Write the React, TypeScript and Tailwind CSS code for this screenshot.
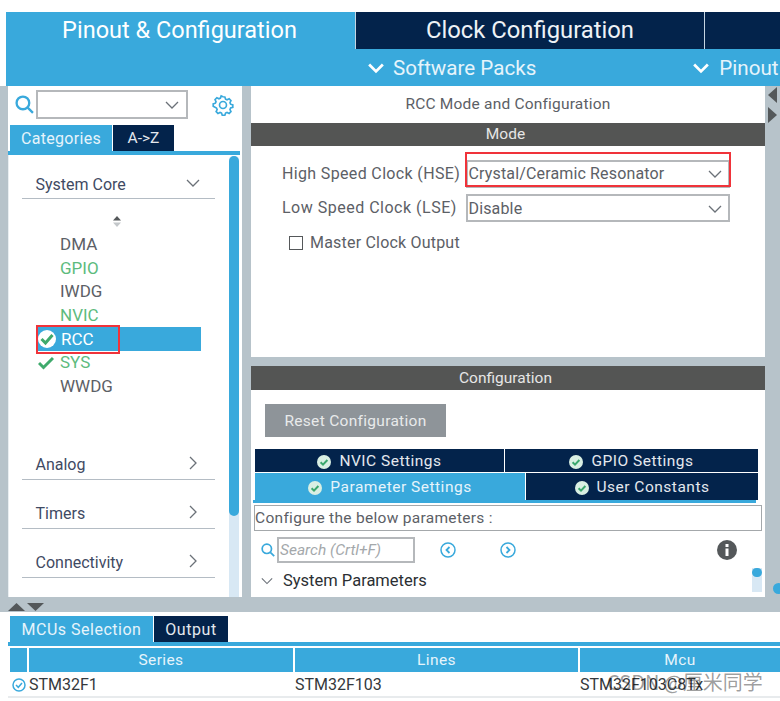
import React from "react";

const Chevron = ({ dir = "down", size = 14, color = "#6b7178", sw = 1.3 }: { dir?: "down" | "right"; size?: number; color?: string; sw?: number }) => (
  <svg width={size} height={size} viewBox="0 0 14 14" fill="none" stroke={color} strokeWidth={sw} className="shrink-0">
    {dir === "down" ? <path d="M1 4l6 6 6-6" /> : <path d="M4 1l6 6-6 6" />}
  </svg>
);

const Search = ({ size = 18 }: { size?: number }) => (
  <svg width={size} height={size} viewBox="0 0 18 18" fill="none" stroke="#39a9dc" strokeWidth="2.2" className="shrink-0">
    <circle cx="7.5" cy="7.5" r="6" />
    <path d="M12 12l5 5" />
  </svg>
);

const TabCheck = () => (
  <svg width="14" height="14" viewBox="0 0 14 14" className="shrink-0">
    <circle cx="7" cy="7" r="7" fill="#d9efe3" />
    <path d="M3.6 7.2l2.4 2.4 4.4-4.6" fill="none" stroke="#3aa76d" strokeWidth="2" />
  </svg>
);

const CircleArrow = ({ left }: { left?: boolean }) => (
  <svg width="16" height="16" viewBox="0 0 16 16" fill="none" stroke="#39a9dc" strokeWidth="1.5">
    <circle cx="8" cy="8" r="7" />
    <path d={left ? "M9.5 5L6.5 8l3 3" : "M6.5 5l3 3-3 3"} strokeWidth="1.8" />
  </svg>
);

const Cat = ({ label, open, h, pb = "pb-[4px]" }: { label: string; open?: boolean; h: string; pb?: string }) => (
  <div className={`ml-[13px] flex w-[193px] items-end justify-between border-b border-[#b4bcc4] pl-[13.500px] pr-[15px] text-[16px] text-[#3f4a63] ${pb} ${h}`}>
    <span className="leading-[20px]">{label}</span>
    <span className="mb-[5px]"><Chevron dir={open ? "down" : "right"} size={14} /></span>
  </div>
);

const Item = ({ label, color = "text-[#5c6066]", check }: { label: string; color?: string; check?: boolean }) => (
  <div className={`ml-[28px] flex h-[23.7px] w-[164px] items-center text-[17px] leading-none ${color}`}>
    <span className="flex w-[23px] justify-center pr-[6px]">
      {check && (
        <svg width="16" height="14" viewBox="0 0 16 14" fill="none" stroke="#3faa6c" strokeWidth="3" className="shrink-0">
          <path d="M1 7l4.500 4.500L15 2" />
        </svg>
      )}
    </span>
    <span>{label}</span>
  </div>
);

const DarkTab = ({ label, w, h = "h-[23px]" }: { label: string; w: string; h?: string }) => (
  <div className={`flex items-center justify-center gap-2 bg-[#03234b] pt-[2px] text-[15.500px] tracking-[0.5px] text-[#e4e8ee] ${w} ${h}`}>
    <TabCheck />
    <span>{label}</span>
  </div>
);

const Select = ({ label }: { label: string }) => (
  <div className="flex h-[28px] w-[264px] items-center justify-between border-2 border-[#b5b8bb] pl-[0.500px] pr-[6px] pt-[1px] text-[16px] tracking-[0.15px] text-[#5c6066]">
    <span>{label}</span>
    <Chevron size={14} />
  </div>
);

const Tri = ({ d, cls }: { d: string; cls: string }) => (
  <svg viewBox="0 0 10 10" preserveAspectRatio="none" className={cls} fill="#54585a"><path d={d} /></svg>
);

export default function App() {
  return (
    <div className="relative h-[701px] w-[780px] overflow-hidden bg-white font-['Roboto',sans-serif]">
      <div className="ml-[6px] mt-[12px] flex h-[74px] flex-col bg-[#39a9dc] text-white">
        <div className="flex h-[37px]">
          <div className="flex w-[349px] items-center justify-center pr-[2px] pt-[1px] text-[23.500px]">Pinout &amp; Configuration</div>
          <div className="flex w-[349px] items-center justify-center border-l border-[#c5d5e2] bg-[#03234b] pt-[1px] text-[23.800px] text-[#eef2f6]">Clock Configuration</div>
          <div className="flex-1 border-l border-[#c5d5e2] bg-[#03234b]" />
        </div>
        <div className="flex h-[37px] items-center whitespace-nowrap pt-[1px] text-[#e6f4fb]">
          <div className="ml-[362px] flex items-center gap-[9px] text-[20.600px]">
            <Chevron size={16} color="#fff" sw={2.4} />
            <span>Software Packs</span>
          </div>
          <div className="ml-[157px] flex items-center gap-[10px] text-[20.600px]">
            <Chevron size={16} color="#fff" sw={2.4} />
            <span>Pinout</span>
          </div>
        </div>
      </div>

      <div className="flex h-[511px] bg-[#b7c3ca] pl-[8px]">
        <div className="flex w-[234px] flex-col bg-white">
          <div className="flex h-[36px] items-center pl-[7px] pt-[1px]">
            <Search size={19} />
            <div className="ml-[2px] flex h-[29px] w-[152px] items-center justify-end border-2 border-[#b5b8bb] pr-[7px]">
              <Chevron size={14} />
            </div>
            <svg width="22" height="22" viewBox="0 0 24 24" fill="none" stroke="#39a9dc" strokeWidth="1.800" className="ml-[24px]">
              <path d="M12 3l2 .2.800 2.400 1.600.7 2.300-1.100 2 2-1.100 2.300.7 1.600 2.400.8v2.600l-2.400.8-.7 1.600 1.100 2.300-2 2-2.300-1.100-1.600.7-.8 2.400h-2.800l-.8-2.400-1.600-.7-2.300 1.100-2-2 1.100-2.300-.7-1.600L1.300 13.400v-2.600l2.400-.8.700-1.600-1.100-2.300 2-2 2.300 1.100 1.600-.7.800-2.400z" />
              <circle cx="12" cy="12" r="3.800" />
            </svg>
          </div>
          <div className="flex h-[29px] pl-[2px] pt-[3px]">
            <div className="flex h-[26px] w-[102px] items-center justify-center bg-[#39a9dc] pt-[1px] text-[16px] tracking-[0.3px] text-[#e6f4fb]">Categories</div>
            <div className="ml-[1px] flex h-[26px] w-[61px] items-center justify-center bg-[#03234b] pt-[1px] text-[15.500px] text-[#e4e8ee]">A-&gt;Z</div>
          </div>
          <div className="relative h-[4px] w-[232px] bg-[#39a9dc]" />
          <div className="relative flex-1 border-l border-[#e9eef1]">
            <Cat label="System Core" open h="h-[44px]" pb="pb-[3px]" />
            <div className="flex h-[33.500px] items-center justify-center pr-[18px] pt-[11px]">
              <svg width="10" height="13" viewBox="0 0 10 13">
                <path d="M5 1l4 4.500H1z" fill="#54585a" />
                <path d="M5 12l4-4.500H1z" fill="#c3c7ca" />
              </svg>
            </div>
            <Item label="DMA" />
            <Item label="GPIO" color="text-[#5dbb7d]" />
            <Item label="IWDG" />
            <Item label="NVIC" color="text-[#5dbb7d]" />
            <div className="ml-[28px] flex h-[23.7px] w-[164px] items-center bg-[#39a9dc] text-[17px] leading-none text-white">
              <span className="flex w-[23px] justify-center pr-[3px]">
                <svg width="18" height="18" viewBox="0 0 18 18" className="shrink-0">
                  <circle cx="9" cy="9" r="9" fill="#fff" />
                  <path d="M3.500 9l4 4 7-8" fill="none" stroke="#3faa6c" strokeWidth="3" />
                </svg>
              </span>
              <span className="ml-[1px]">RCC</span>
            </div>
            <Item label="SYS" color="text-[#5dbb7d]" check />
            <Item label="WWDG" />
            <div className="h-[0.500px]" />
            <Cat label="Analog" h="h-[81px]" />
            <Cat label="Timers" h="h-[49px]" />
            <Cat label="Connectivity" h="h-[49px]" />
            <div className="absolute bottom-0 right-[3px] top-[1px] w-[10px] rounded-t-[4px] bg-[#d8e8f4]">
              <div className="h-[360px] rounded-[5px] bg-[#39a9dc]" />
            </div>
          </div>
        </div>

        <div className="ml-[9px] flex w-[514px] flex-col bg-white">
          <div className="flex h-[37px] items-center justify-center pt-[1px] text-[15.500px] tracking-[0.2px] text-[#5c6066]">RCC Mode and Configuration</div>
          <div className="flex h-[23px] items-center justify-center bg-[#545554] pr-[5px] pt-[1px] text-[15.500px] text-[#e6e6e6]">Mode</div>
          <div className="h-[211px]">
            <div className="ml-[31px] mt-[12px] flex h-[28px] items-center pt-[3px] text-[16px] tracking-[0.35px] text-[#5c6066]">
              <span className="w-[184px]">High Speed Clock (HSE)</span>
              <Select label="Crystal/Ceramic Resonator" />
            </div>
            <div className="ml-[31px] mt-[8px] flex h-[28px] items-center text-[16px] tracking-[0.5px] text-[#5c6066]">
              <span className="w-[184px]">Low Speed Clock (LSE)</span>
              <Select label="Disable" />
            </div>
            <div className="ml-[38px] mt-[9px] flex items-center gap-[7px] text-[16px] tracking-[0.2px] text-[#5c6066]">
              <div className="h-[14px] w-[14px] border border-[#55585a]" />
              <span>Master Clock Output</span>
            </div>
          </div>
          <div className="h-[9px] bg-[#b7c3ca]" />
          <div className="flex h-[24px] items-center justify-center bg-[#545554] pr-[5px] pt-[1px] text-[15.500px] text-[#e6e6e6]">Configuration</div>
          <div className="flex-1">
            <div className="ml-[14px] mt-[14px] flex h-[33px] w-[181px] items-center justify-center bg-[#8e9499] pt-[2px] text-[15.500px] tracking-[0.3px] text-[#e8eaeb]">Reset Configuration</div>
            <div className="ml-[4px] mt-[12px] flex w-[503px] gap-[1px]">
              <DarkTab label="NVIC Settings" w="w-[249px]" />
              <DarkTab label="GPIO Settings" w="flex-1" />
            </div>
            <div className="ml-[4px] mt-[1px] flex w-[503px] gap-[1px]">
              <div className="flex h-[27px] w-[270px] items-center justify-center gap-2 bg-[#39a9dc] pt-[2px] text-[15.500px] tracking-[0.5px] text-[#e6f4fb]">
                <TabCheck />
                <span>Parameter Settings</span>
              </div>
              <DarkTab label="User Constants" w="flex-1" h="h-[27px]" />
            </div>
            <div className="ml-[2px] h-[3px] w-[503px] bg-[#39a9dc]" />
            <div className="ml-[3px] mt-[2px] flex h-[26px] w-[508px] items-center border border-[#a4a8ab] pt-[1px] text-[15.500px] tracking-[0.3px] text-[#5c6066]">Configure the below parameters :</div>
            <div className="mt-[6px] flex h-[26px] items-center pl-[10px]">
              <Search size={14} />
              <div className="ml-[2px] flex h-[26px] w-[138px] items-center border-2 border-[#b5b8bb] pl-[1px] pt-[1px] text-[15.500px] italic text-[#a4a8ab]">Search (Crtl+F)</div>
              <span className="ml-[25px] flex"><CircleArrow left /></span>
              <span className="ml-[44px] flex"><CircleArrow /></span>
              <svg width="20" height="20" viewBox="0 0 20 20" className="ml-[201px]">
                <circle cx="10" cy="10" r="10" fill="#54585a" />
                <rect x="8.500" y="8.500" width="3" height="7.500" fill="#fff" />
                <rect x="8.500" y="4" width="3" height="3" fill="#fff" />
              </svg>
            </div>
            <div className="relative mt-[8px] flex h-[20px] items-center pl-[10px] text-[16.500px] text-[#2b2f33]">
              <Chevron size={12} />
              <span className="ml-[10px]">System Parameters</span>
              <div className="absolute right-[3px] top-[-3px] h-[24px] w-[10px] bg-[#d8e8f4]">
                <div className="h-[9px] w-[10px] rounded-full bg-[#39a9dc]" />
              </div>
            </div>
          </div>
        </div>

        <div className="relative flex-1">
          <Tri d="M10 0v10L0 5z" cls="absolute left-[3px] top-[1px] h-[16px] w-[9px]" />
          <Tri d="M0 0v10l10-5z" cls="absolute left-[3px] top-[21px] h-[16px] w-[9px]" />
          <div className="absolute bottom-[3px] right-[-4px] h-[11px] w-[11px] rounded-full bg-[#39a9dc]" />
        </div>
      </div>

      <div className="relative flex h-[15px] items-start gap-[2px] bg-[#b7c3ca] pl-[8px] pt-[6px]">
        <Tri d="M5 0l5 10H0z" cls="h-[8px] w-[17px]" />
        <Tri d="M5 10l5-10H0z" cls="h-[8px] w-[17px]" />
      </div>

      <div className="flex h-[87px] flex-col bg-white pl-[8px] pt-[4px]">
        <div className="flex h-[26px] pl-[2px]">
          <div className="flex w-[143px] items-center justify-center bg-[#39a9dc] pt-[1px] text-[16px] tracking-[0.5px] text-[#e6f4fb]">MCUs Selection</div>
          <div className="ml-[1px] flex w-[74px] items-center justify-center bg-[#03234b] pt-[1px] text-[16px] tracking-[0.6px] text-[#e4e8ee]">Output</div>
        </div>
        <div className="h-[4px] bg-[#39a9dc]" />
        <div className="mt-[2px] flex h-[24px] gap-[2px] pl-[2px] pt-[1px] text-[15.500px] tracking-[0.4px] text-[#e6f4fb]">
          <div className="-mt-[1px] w-[17px] bg-[#39a9dc]" />
          <div className="-mt-[1px] flex w-[264px] items-center justify-center bg-[#39a9dc] pt-[1px]">Series</div>
          <div className="-mt-[1px] flex w-[283px] items-center justify-center bg-[#39a9dc] pt-[1px]">Lines</div>
          <div className="-mt-[1px] flex flex-1 items-center justify-center bg-[#39a9dc] pt-[1px]">Mcu</div>
        </div>
        <div className="flex h-[26px] items-center gap-[2px] border-b-2 border-[#e8ebed] pl-[2px] pt-[1px] text-[16px] text-[#34383c]">
          <div className="flex w-[17px] justify-center">
            <svg width="14" height="14" viewBox="0 0 14 14" fill="none" stroke="#39a9dc" strokeWidth="1.500">
              <circle cx="7" cy="7" r="6" />
              <path d="M4 7l2.300 2.300L10 5" />
            </svg>
          </div>
          <div className="w-[264px]">STM32F1</div>
          <div className="w-[283px]">STM32F103</div>
          <div>STM32F103C8Tx</div>
        </div>
      </div>

      <div className="absolute left-[36px] top-[325px] h-[29px] w-[84px] border-[2.500px] border-[#f0333a]" />
      <div className="absolute left-[465px] top-[152px] h-[35px] w-[266px] border-[2.500px] border-[#f0333a]" />
      <div className="absolute left-[607px] top-[670px] font-['Noto_Sans_CJK_SC',sans-serif] text-[20px] leading-[24px] text-[#00000066]">CSDN @厘米同学</div>
    </div>
  );
}
